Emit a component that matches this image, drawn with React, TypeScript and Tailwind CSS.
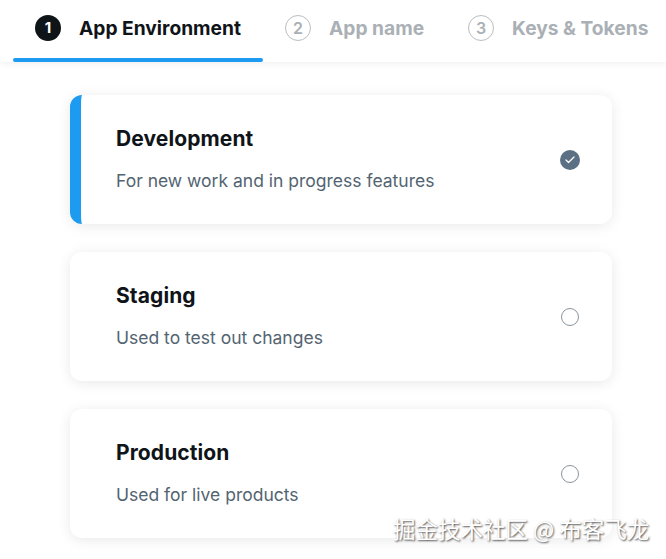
import { Check } from 'lucide-react';

const steps = [
  { n: 1, label: 'App Environment', active: true },
  { n: 2, label: 'App name', active: false },
  { n: 3, label: 'Keys & Tokens', active: false },
];

const envs = [
  { title: 'Development', desc: 'For new work and in progress features', selected: true },
  { title: 'Staging', desc: 'Used to test out changes', selected: false },
  { title: 'Production', desc: 'Used for live products', selected: false },
];

export default function App() {
  return (
    <div
      className="relative w-[666px] h-[559px] overflow-hidden bg-white text-[#0f1419]"
      style={{ fontFamily: 'Inter, "Noto Sans", sans-serif' }}
    >
      <div className="h-[62px] bg-white shadow-[0_2px_6px_rgba(0,0,0,0.06)] flex pl-[13px] relative z-10 overflow-hidden">
        {steps.map((s) => (
          <div
            key={s.n}
            className="relative shrink-0 flex items-center gap-[18px] px-[22px] pb-[6px] h-full whitespace-nowrap"
          >
            {s.active ? (
              <span className="shrink-0 w-[26px] h-[26px] rounded-full bg-[#0f1419] text-white text-[15px] font-bold flex items-center justify-center">
                {s.n}
              </span>
            ) : (
              <span className="shrink-0 w-[26px] h-[26px] rounded-full border border-[#b9bec2] text-[#aab0b5] text-[16px] font-semibold flex items-center justify-center">
                {s.n}
              </span>
            )}
            <span
              className={
                s.active
                  ? 'text-[19.2px] font-bold text-[#0f1419]'
                  : 'text-[19.2px] font-bold text-[#aab0b5]'
              }
            >
              {s.label}
            </span>
            {s.active && (
              <div className="absolute left-0 right-0 bottom-0 h-[4px] rounded-full bg-[#1d9bf0]" />
            )}
          </div>
        ))}
      </div>

      <div className="pt-[33px] pl-[70px] flex flex-col gap-[28px]">
        {envs.map((e) => (
          <div
            key={e.title}
            className={
              e.selected
                ? 'w-[542px] h-[129px] rounded-[12px] bg-white shadow-[0_2px_14px_rgba(0,0,0,0.09)] border-l-[11px] border-[#1d9bf0] flex items-center pl-[35px] pr-[32px]'
                : 'w-[542px] h-[129px] rounded-[12px] bg-white shadow-[0_2px_14px_rgba(0,0,0,0.09)] flex items-center pl-[46px] pr-[33px]'
            }
          >
            <div className="flex-1 flex flex-col gap-[18px]">
              <div className="text-[21px] leading-[24px] font-bold tracking-[0.1px] text-[#0f1419]">
                {e.title}
              </div>
              <div className="text-[17.5px] leading-[24px] text-[#536471]">{e.desc}</div>
            </div>
            {e.selected ? (
              <span className="w-[20px] h-[20px] rounded-full bg-[#5b7083] flex items-center justify-center">
                <Check className="w-[12px] h-[12px] text-white" strokeWidth={2.5} />
              </span>
            ) : (
              <span className="w-[18px] h-[18px] rounded-full border border-[#8a949c]" />
            )}
          </div>
        ))}
      </div>

      <div
        className="absolute left-[393px] top-[514px] text-[22.5px] leading-[28px] text-white whitespace-nowrap [text-shadow:1px_1px_2px_rgba(0,0,0,0.7)]"
        style={{ fontFamily: '"Noto Sans CJK SC", "Noto Sans", sans-serif' }}
      >
        掘金技术社区 @ 布客飞龙
      </div>
    </div>
  );
}
